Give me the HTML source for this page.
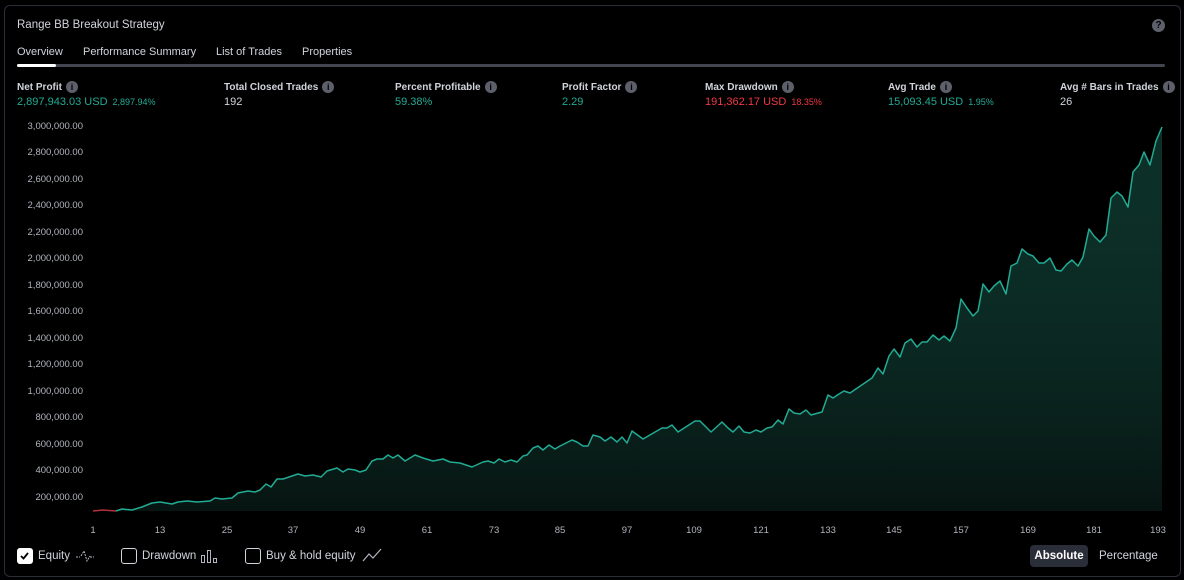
<!DOCTYPE html>
<html><head><meta charset="utf-8"><style>
*{margin:0;padding:0;box-sizing:border-box}
body{width:1184px;height:580px;background:#000;font-family:"Liberation Sans",sans-serif;color:#d1d4dc;position:relative;overflow:hidden}
.panel{position:absolute;left:4px;top:5px;width:1177px;height:572px;border:1px solid #2a2e39;border-radius:6px}
.a{position:absolute;white-space:nowrap}
.title{left:17px;top:19px;font-size:11.5px;color:#d1d4dc}
.tab{top:46px;font-size:11px;color:#d1d4dc}
.lbl{top:81px;font-size:10px;font-weight:bold;color:#d1d4dc;display:flex;align-items:center}
.info{display:inline-block;width:12px;height:12px;border-radius:50%;background:#5d606b;margin-left:4px;color:#000;font-size:9px;line-height:12px;text-align:center;font-weight:bold}
.val{top:96px;font-size:11px}
.g{color:#22ab94}.r{color:#f23645}.w{color:#d1d4dc}
.sm{font-size:9px;margin-left:5px}
.yl{font-size:9.5px;color:#b2b5be;right:1101px;text-align:right}
.xl{font-size:9.5px;color:#b2b5be;top:525px;transform:translateX(-50%)}
.cb{position:absolute;top:548px;width:16px;height:16px;border:1.5px solid #d1d4dc;border-radius:3px}
.lg{top:550px;font-size:11.5px;color:#d1d4dc}
</style></head><body>
<div class="panel"></div>
<div class="a title">Range BB Breakout Strategy</div>
<div class="a" style="left:1152px;top:19px;width:13px;height:13px;border-radius:50%;background:#5d606b;color:#000;font-size:10px;font-weight:bold;text-align:center;line-height:13px">?</div>
<div class="a tab" style="left:17px">Overview</div>
<div class="a tab" style="left:83px">Performance Summary</div>
<div class="a tab" style="left:216px">List of Trades</div>
<div class="a tab" style="left:302px">Properties</div>
<div class="a" style="left:17px;top:64px;width:1148px;height:3px;background:#434651;border-radius:2px"></div>
<div class="a" style="left:17px;top:64px;width:39px;height:3px;background:#fff;border-radius:2px"></div>

<div class="a lbl" style="left:17px">Net Profit<span class="info">i</span></div>
<div class="a val g" style="left:17px">2,897,943.03 USD<span class="sm">2,897.94%</span></div>
<div class="a lbl" style="left:224px">Total Closed Trades<span class="info">i</span></div>
<div class="a val w" style="left:224px">192</div>
<div class="a lbl" style="left:395px">Percent Profitable<span class="info">i</span></div>
<div class="a val g" style="left:395px">59.38%</div>
<div class="a lbl" style="left:562px">Profit Factor<span class="info">i</span></div>
<div class="a val g" style="left:562px">2.29</div>
<div class="a lbl" style="left:705px">Max Drawdown<span class="info">i</span></div>
<div class="a val r" style="left:705px">191,362.17 USD<span class="sm">18.35%</span></div>
<div class="a lbl" style="left:888px">Avg Trade<span class="info">i</span></div>
<div class="a val g" style="left:888px">15,093.45 USD<span class="sm">1.95%</span></div>
<div class="a lbl" style="left:1060px">Avg # Bars in Trades<span class="info">i</span></div>
<div class="a val w" style="left:1060px">26</div>

<div class="a yl" style="top:121px">3,000,000.00</div>
<div class="a yl" style="top:147px">2,800,000.00</div>
<div class="a yl" style="top:174px">2,600,000.00</div>
<div class="a yl" style="top:200px">2,400,000.00</div>
<div class="a yl" style="top:227px">2,200,000.00</div>
<div class="a yl" style="top:253px">2,000,000.00</div>
<div class="a yl" style="top:280px">1,800,000.00</div>
<div class="a yl" style="top:306px">1,600,000.00</div>
<div class="a yl" style="top:333px">1,400,000.00</div>
<div class="a yl" style="top:359px">1,200,000.00</div>
<div class="a yl" style="top:386px">1,000,000.00</div>
<div class="a yl" style="top:412px">800,000.00</div>
<div class="a yl" style="top:439px">600,000.00</div>
<div class="a yl" style="top:465px">400,000.00</div>
<div class="a yl" style="top:492px">200,000.00</div>

<svg class="a" style="left:0;top:0" width="1184" height="580">
<defs><linearGradient id="f" x1="0" y1="0" x2="0" y2="1"><stop offset="0" stop-color="#17604f" stop-opacity="0.5"/><stop offset="1" stop-color="#081714" stop-opacity="0.9"/></linearGradient></defs>
<polygon fill="url(#f)" points="93,511 103,510 116,511 122,509 132,510 142,507 152,503 160,502 166,503 172,504 178,502 187,501 197,502 210,501 215,498 222,499 232,498 238,493 248,491 255,492 260,490 266,484 271,487 277,479 283,479 298,474 305,476 313,475 321,477 327,471 337,468 343,472 348,469 355,470 360,472 366,470 372,461 377,459 383,459 388,455 393,458 398,455 405,461 415,455 423,458 433,461 443,459 450,462 460,463 472,467 483,462 488,461 494,463 499,459 505,462 511,460 517,462 523,456 527,455 533,448 538,446 543,450 549,445 555,449 560,446 572,440 577,442 583,446 588,446 593,435 600,437 605,441 611,437 617,442 622,437 627,443 632,431 643,439 662,428 667,428 672,425 678,432 695,421 700,421 711,432 722,422 728,428 733,432 739,426 744,432 750,433 756,430 761,432 767,428 772,427 778,420 783,424 789,409 794,413 800,414 806,410 811,415 822,412 828,395 833,398 839,394 844,391 850,393 872,378 878,368 883,374 889,356 894,349 900,357 905,343 911,339 917,347 922,342 927,342 933,335 939,340 944,336 950,341 956,328 961,299 967,308 973,316 978,311 983,284 989,292 994,286 1000,281 1006,294 1011,266 1017,263 1022,249 1028,254 1033,256 1039,263 1044,263 1050,258 1056,270 1061,271 1067,264 1072,260 1078,266 1083,257 1089,229 1094,236 1100,242 1106,235 1111,198 1117,192 1122,196 1128,207 1133,172 1139,165 1144,152 1150,165 1156,141 1162,127 1162,511"/>
<polyline fill="none" stroke="#22ab94" stroke-width="1.5" stroke-linejoin="round" points="116,511 122,509 132,510 142,507 152,503 160,502 166,503 172,504 178,502 187,501 197,502 210,501 215,498 222,499 232,498 238,493 248,491 255,492 260,490 266,484 271,487 277,479 283,479 298,474 305,476 313,475 321,477 327,471 337,468 343,472 348,469 355,470 360,472 366,470 372,461 377,459 383,459 388,455 393,458 398,455 405,461 415,455 423,458 433,461 443,459 450,462 460,463 472,467 483,462 488,461 494,463 499,459 505,462 511,460 517,462 523,456 527,455 533,448 538,446 543,450 549,445 555,449 560,446 572,440 577,442 583,446 588,446 593,435 600,437 605,441 611,437 617,442 622,437 627,443 632,431 643,439 662,428 667,428 672,425 678,432 695,421 700,421 711,432 722,422 728,428 733,432 739,426 744,432 750,433 756,430 761,432 767,428 772,427 778,420 783,424 789,409 794,413 800,414 806,410 811,415 822,412 828,395 833,398 839,394 844,391 850,393 872,378 878,368 883,374 889,356 894,349 900,357 905,343 911,339 917,347 922,342 927,342 933,335 939,340 944,336 950,341 956,328 961,299 967,308 973,316 978,311 983,284 989,292 994,286 1000,281 1006,294 1011,266 1017,263 1022,249 1028,254 1033,256 1039,263 1044,263 1050,258 1056,270 1061,271 1067,264 1072,260 1078,266 1083,257 1089,229 1094,236 1100,242 1106,235 1111,198 1117,192 1122,196 1128,207 1133,172 1139,165 1144,152 1150,165 1156,141 1162,127"/>
<polyline fill="none" stroke="#b2303c" stroke-width="1.5" points="93,511 103,510 116,511"/>
</svg>

<div class="a xl" style="left:93px">1</div>
<div class="a xl" style="left:160px">13</div>
<div class="a xl" style="left:227px">25</div>
<div class="a xl" style="left:293px">37</div>
<div class="a xl" style="left:360px">49</div>
<div class="a xl" style="left:427px">61</div>
<div class="a xl" style="left:494px">73</div>
<div class="a xl" style="left:560px">85</div>
<div class="a xl" style="left:627px">97</div>
<div class="a xl" style="left:694px">109</div>
<div class="a xl" style="left:761px">121</div>
<div class="a xl" style="left:828px">133</div>
<div class="a xl" style="left:894px">145</div>
<div class="a xl" style="left:961px">157</div>
<div class="a xl" style="left:1028px">169</div>
<div class="a xl" style="left:1094px">181</div>
<div class="a xl" style="left:1158px">193</div>

<div class="cb" style="left:17px;background:#fff;border-color:#fff"><svg width="13" height="13" style="position:absolute;left:0;top:0"><path d="M3 7 L5.5 9.5 L10 4" stroke="#000" stroke-width="1.8" fill="none"/></svg></div>
<div class="a lg" style="left:38px">Equity</div>
<svg class="a" style="left:75px;top:548px" width="20" height="16"><path d="M1 9 L5 9 M6 8 L9 3 L12 13 L15 8 M15 9 L19 9" stroke="#b2b5be" stroke-width="1" fill="none" stroke-dasharray="2 1"/></svg>
<div class="cb" style="left:121px"></div>
<div class="a lg" style="left:142px">Drawdown</div>
<svg class="a" style="left:199px;top:548px" width="20" height="16"><rect x="2.5" y="7.5" width="3" height="7" fill="none" stroke="#b2b5be"/><rect x="8.5" y="2.5" width="3" height="12" fill="none" stroke="#b2b5be"/><rect x="14.5" y="10.5" width="3" height="4" fill="none" stroke="#b2b5be"/></svg>
<div class="cb" style="left:245px"></div>
<div class="a lg" style="left:266px">Buy &amp; hold equity</div>
<svg class="a" style="left:362px;top:547px" width="20" height="16"><path d="M1 14 L7 7 L11 11 L19 2" stroke="#b2b5be" stroke-width="1.2" fill="none"/></svg>

<div class="a" style="left:1030px;top:545px;width:58px;height:22px;background:#2a2e39;border-radius:4px;color:#fff;font-size:11.5px;font-weight:bold;text-align:center;line-height:22px">Absolute</div>
<div class="a" style="left:1099px;top:550px;font-size:11.5px;color:#d1d4dc">Percentage</div>
</body></html>
